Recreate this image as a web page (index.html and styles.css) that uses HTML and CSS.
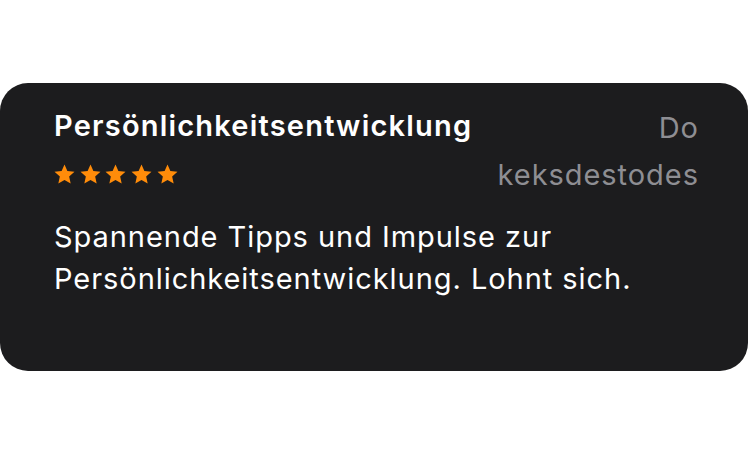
FILE: index.html
```html
<!DOCTYPE html>
<html lang="de">
<head>
<meta charset="utf-8">
<link rel="stylesheet" href="styles.css">
</head>
<body>
<div class="card">
  <div class="head">
    <div class="left">
      <div class="title">Persönlichkeitsentwicklung</div>
      <div class="stars">
        <svg viewBox="0 0.3 24 22.3"><path d="M12 0.6L15.29 8.08 23.41 8.89 17.32 14.33 19.05 22.31 12 18.2 4.95 22.31 6.68 14.33 0.59 8.89 8.71 8.08Z"/></svg>
        <svg viewBox="0 0.3 24 22.3"><path d="M12 0.6L15.29 8.08 23.41 8.89 17.32 14.33 19.05 22.31 12 18.2 4.95 22.31 6.68 14.33 0.59 8.89 8.71 8.08Z"/></svg>
        <svg viewBox="0 0.3 24 22.3"><path d="M12 0.6L15.29 8.08 23.41 8.89 17.32 14.33 19.05 22.31 12 18.2 4.95 22.31 6.68 14.33 0.59 8.89 8.71 8.08Z"/></svg>
        <svg viewBox="0 0.3 24 22.3"><path d="M12 0.6L15.29 8.08 23.41 8.89 17.32 14.33 19.05 22.31 12 18.2 4.95 22.31 6.68 14.33 0.59 8.89 8.71 8.08Z"/></svg>
        <svg viewBox="0 0.3 24 22.3"><path d="M12 0.6L15.29 8.08 23.41 8.89 17.32 14.33 19.05 22.31 12 18.2 4.95 22.31 6.68 14.33 0.59 8.89 8.71 8.08Z"/></svg>
      </div>
    </div>
    <div class="meta">
      <div class="date">Do</div>
      <div class="author">keksdestodes</div>
    </div>
  </div>
  <p class="body">Spannende Tipps und Impulse zur Persönlichkeitsentwicklung. Lohnt sich.</p>
</div>
</body>
</html>
```
FILE: styles.css
```css
html, body {
  margin: 0;
  padding: 0;
  background: #ffffff;
}
body {
  font-family: Inter, "Noto Sans", sans-serif;
  padding-top: 83px;
}
.card {
  background: #1c1c1e;
  border-radius: 28px;
  height: 288px;
  box-sizing: border-box;
  padding: 26px 50px 0 54px;
}
.head {
  display: flex;
  justify-content: space-between;
  align-items: flex-start;
}
.title {
  color: #ffffff;
  font-size: 29px;
  font-weight: 600;
  letter-spacing: 1.2px;
  line-height: 34px;
}
.stars {
  display: flex;
  gap: 4.7px;
  margin-top: 21px;
}
.stars svg {
  width: 21px;
  height: 20px;
  fill: #ff8c0a;
}
.meta {
  margin-top: -5px;
  text-align: right;
  color: #8e8e93;
  font-size: 29px;
  letter-spacing: 0.95px;
  line-height: 47px;
  margin-right: -0.95px;
}
.body {
  margin: 18px 0 0;
  color: #ffffff;
  font-size: 29px;
  letter-spacing: 0.95px;
  line-height: 42px;
  width: 620px;
}
```
